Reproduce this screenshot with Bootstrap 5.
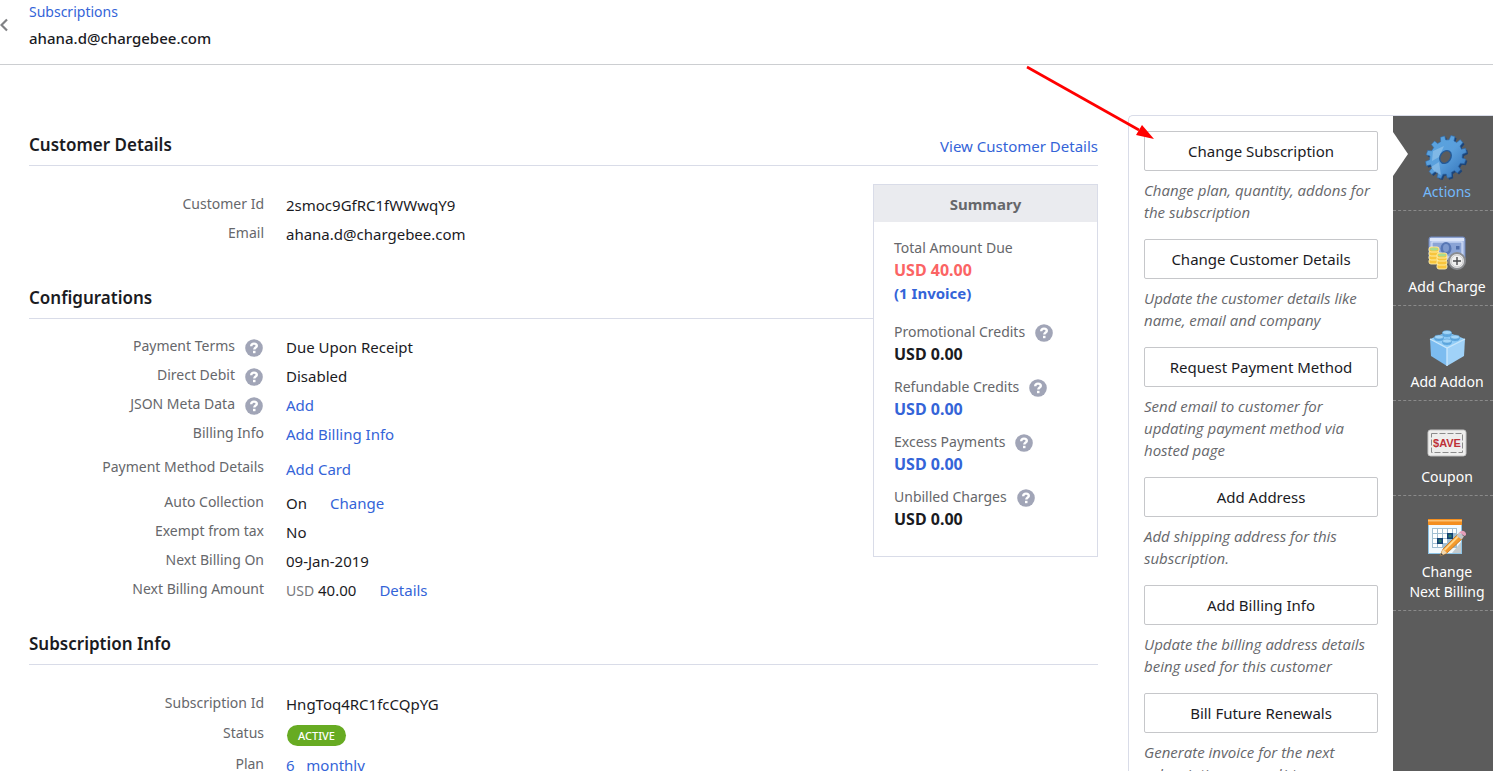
<!DOCTYPE html>
<html lang="en">
<head>
<meta charset="utf-8">
<meta name="viewport" content="width=device-width, initial-scale=1">
<title>Subscription details</title>
<link rel="stylesheet" href="https://cdn.jsdelivr.net/npm/bootstrap@5.3.0/dist/css/bootstrap.min.css">
<style>
  body { font-family: "Noto Sans", "Open Sans", sans-serif; font-size: 15px; line-height: 23px; color: #1b1b1f; }
  a { color: #3464d8; text-decoration: none; }
  a:hover { text-decoration: underline; }

  .page-head { border-bottom: 1px solid #ccced1; padding: 1px 0 11px 29px; }
  .crumb { font-size: 14px; line-height: 22px; }
  .page-title { font-size: 15px; line-height: 30px; font-weight: 500; }
  .back-link { left: 0; top: 18px; line-height: 0; }

  .page-body { padding-top: 50px; }
  .details { padding: 11px 30px 0 29px; min-width: 0; }
  .section-head { height: 40px; padding-bottom: 7px; border-bottom: 1px solid #d9dce8; }
  .section-head h2 { font-size: 17px; line-height: 26px; font-weight: 600; }
  .section-far { margin-top: 30px; }
  .section-near { margin-top: 20px; }

  .fields { margin: 0; padding-top: 25px; }
  .fields-tight { padding-top: 14px; }
  .field { display: flex; align-items: center; gap: 22px; min-height: 29px; }
  .field dt { width: 235px; flex: none; display: flex; justify-content: flex-end; gap: 10px; padding-bottom: 5px;
              font-size: 14px; font-weight: 400; color: #66676b; }
  .field dd { margin: 0; display: flex; gap: 23px; }
  .field-roomy { min-height: 40px; }
  .field-status { min-height: 32px; }
  .help { width: 18px; height: 18px; flex: none; margin-top: 4px; }
  .field .help { margin: 5px 1px 0 0; }
  .unit { font-size: 14px; color: #77787c; }
  .status-pill { background: #67ab22; color: #fff; font-size: 11px; line-height: 21px; font-weight: 500; padding: 0 11px; margin-left: 1px; }

  .summary { width: 225px; margin-top: 18px; border: 1px solid #d9dce8; background: #fff; }
  .summary h3 { margin: 0; height: 37px; padding-top: 1px; font-size: 15px; line-height: 37px; font-weight: 700; text-align: center; color: #66676b; background: #eaebef; }
  .summary-body { padding: 14px 20px 25px; }
  .sum-group { margin-bottom: 9px; }
  .sum-first { margin-bottom: 15px; }
  .sum-label { display: flex; gap: 10px; height: 23px; font-size: 14px; color: #66676b; }
  .sum-value { font-size: 16px; font-weight: 700; }
  .sum-link { font-size: 15px; font-weight: 700; }
  .due { color: #fb6464; }

  .side { width: 365px; border: 1px solid #d9dce8; border-width: 1px 0 0 1px; border-top-left-radius: 5px; }
  .action-list { padding: 15px; min-width: 0; }
  .btn-action { height: 40px; border: 1px solid #c6c7ca; border-radius: 2px; font-size: 15px; color: #1b1b1f; background: #fff; }
  .action-note { font-family: "Open Sans", "Noto Sans", sans-serif; font-size: 15px; line-height: 22px; font-style: italic; color: #66676b; margin: 8px 0 16px; }
  .pointer { left: -103px; top: -51px; pointer-events: none; }

  .rail { width: 100px; background: #5c5c5c; }
  .rail-item { display: block; width: 100%; border: 0; border-bottom: 1px dashed #8a8a8a; background: none; color: #fff;
               padding: 18px 0 8px 8px; font-size: 14px; line-height: 20px; text-align: center; }
  .rail-item svg { display: block; margin: 0 auto; }
  .rail-item.current { color: #73b9fb; }
  .rail-item.current::before { content: ""; position: absolute; left: 0; top: 16px; width: 15px; height: 44px; background: #fff; clip-path: polygon(0 0, 100% 50%, 0 100%); }
</style>
<script src="https://cdn.jsdelivr.net/npm/bootstrap@5.3.0/dist/js/bootstrap.bundle.min.js" defer></script>
</head>
<body class="vh-100 d-flex flex-column overflow-hidden bg-white">

<svg class="d-none" aria-hidden="true">
  <symbol id="help" viewBox="0 0 18 18">
    <circle cx="9" cy="9" r="8.8" fill="#a1a5b7"/>
    <path d="M6.200 7.200C6.300 5.400 7.400 4.600 9 4.600c1.600 0 2.800.9 2.800 2.300 0 1.700-2.500 1.700-2.500 3.700" fill="none" stroke="#fff" stroke-width="2.400"/>
    <rect x="8" y="11.800" width="2.500" height="2.400" fill="#fff"/>
  </symbol>
</svg>

<header class="page-head position-relative">
  <a href="#" class="back-link position-absolute" aria-label="Back">
    <svg width="9" height="14" viewBox="0 0 9 14"><path d="M7 1.500 1.500 7 7 12.500" fill="none" stroke="#808184" stroke-width="2.200"/></svg>
  </a>
  <div class="crumb"><a href="#">Subscriptions</a></div>
  <h1 class="page-title m-0">ahana.d@chargebee.com</h1>
</header>

<main class="page-body d-flex flex-fill align-items-stretch">
  <div class="details flex-fill">
    <div class="section-head d-flex justify-content-between align-items-end">
      <h2 class="m-0">Customer Details</h2>
      <a href="#">View Customer Details</a>
    </div>

    <aside class="summary float-end">
      <h3>Summary</h3>
      <div class="summary-body">
        <div class="sum-first">
          <div class="sum-label">Total Amount Due</div>
          <div class="sum-value due">USD 40.00</div>
          <a href="#" class="sum-link d-block">(1 Invoice)</a>
        </div>
        <div class="sum-group">
          <div class="sum-label">Promotional Credits <svg class="help"><use href="#help"/></svg></div>
          <div class="sum-value">USD 0.00</div>
        </div>
        <div class="sum-group">
          <div class="sum-label">Refundable Credits <svg class="help"><use href="#help"/></svg></div>
          <a href="#" class="sum-value d-block">USD 0.00</a>
        </div>
        <div class="sum-group">
          <div class="sum-label">Excess Payments <svg class="help"><use href="#help"/></svg></div>
          <a href="#" class="sum-value d-block">USD 0.00</a>
        </div>
        <div>
          <div class="sum-label">Unbilled Charges <svg class="help"><use href="#help"/></svg></div>
          <div class="sum-value">USD 0.00</div>
        </div>
      </div>
    </aside>

    <dl class="fields">
      <div class="field"><dt>Customer Id</dt><dd>2smoc9GfRC1fWWwqY9</dd></div>
      <div class="field"><dt>Email</dt><dd>ahana.d@chargebee.com</dd></div>
    </dl>

    <div class="section-head section-far d-flex align-items-end"><h2 class="m-0">Configurations</h2></div>
    <dl class="fields fields-tight">
      <div class="field"><dt>Payment Terms <svg class="help"><use href="#help"/></svg></dt><dd>Due Upon Receipt</dd></div>
      <div class="field"><dt>Direct Debit <svg class="help"><use href="#help"/></svg></dt><dd>Disabled</dd></div>
      <div class="field"><dt>JSON Meta Data <svg class="help"><use href="#help"/></svg></dt><dd><a href="#">Add</a></dd></div>
      <div class="field"><dt>Billing Info</dt><dd><a href="#">Add Billing Info</a></dd></div>
      <div class="field field-roomy"><dt>Payment Method Details</dt><dd><a href="#">Add Card</a></dd></div>
      <div class="field"><dt>Auto Collection</dt><dd>On <a href="#">Change</a></dd></div>
      <div class="field"><dt>Exempt from tax</dt><dd>No</dd></div>
      <div class="field"><dt>Next Billing On</dt><dd>09-Jan-2019</dd></div>
      <div class="field"><dt>Next Billing Amount</dt><dd><span><span class="unit">USD</span> 40.00</span> <a href="#">Details</a></dd></div>
    </dl>

    <div class="section-head section-near d-flex align-items-end"><h2 class="m-0">Subscription Info</h2></div>
    <dl class="fields">
      <div class="field"><dt>Subscription Id</dt><dd>HngToq4RC1fcCQpYG</dd></div>
      <div class="field field-status"><dt>Status</dt><dd><span class="status-pill rounded-pill">ACTIVE</span></dd></div>
      <div class="field"><dt>Plan</dt><dd><a href="#">6 &nbsp; monthly</a></dd></div>
    </dl>
  </div>

  <div class="side d-flex flex-shrink-0 position-relative">
    <div class="action-list flex-fill">
      <button type="button" class="btn btn-action w-100">Change Subscription</button>
      <p class="action-note">Change plan, quantity, addons for the subscription</p>
      <button type="button" class="btn btn-action w-100">Change Customer Details</button>
      <p class="action-note">Update the customer details like name, email and company</p>
      <button type="button" class="btn btn-action w-100">Request Payment Method</button>
      <p class="action-note">Send email to customer for updating payment method via hosted page</p>
      <button type="button" class="btn btn-action w-100">Add Address</button>
      <p class="action-note">Add shipping address for this subscription.</p>
      <button type="button" class="btn btn-action w-100">Add Billing Info</button>
      <p class="action-note">Update the billing address details being used for this customer</p>
      <button type="button" class="btn btn-action w-100">Bill Future Renewals</button>
      <p class="action-note">Generate invoice for the next subscription renewal(s)</p>
    </div>

    <nav class="rail flex-shrink-0">
      <button type="button" class="rail-item current position-relative">
        <svg width="48" height="48" viewBox="0 0 48 48">
          <defs><linearGradient id="gearFill" x1="0" y1="0" x2="1" y2="1"><stop offset="0" stop-color="#5aa5e0"/><stop offset=".5" stop-color="#5a9fdc"/><stop offset="1" stop-color="#2f6fb6"/></linearGradient></defs>
          <path id="gearSide" fill="#1c4478"/><path id="gearFace" fill="url(#gearFill)" stroke="#2f6cac" stroke-width=".6"/>
          <path d="M10 17 21 12 16 23 9 27Z M8 33l8-5 2 13-6-3Z" fill="#b9dcf6" opacity=".4"/>
          <ellipse cx="22.500" cy="23" rx="5.200" ry="6.800" transform="rotate(35 22.500 23)" fill="#5c5c5c" stroke="#245a98" stroke-width="1.400"/>
        </svg>
        Actions
      </button>
      <button type="button" class="rail-item">
        <svg width="48" height="48" viewBox="0 0 48 48">
          <rect x="6" y="8" width="36" height="23" rx="2" fill="#a9bde6" stroke="#6e86bb"/>
          <path d="M7 9h34v3H7z" fill="#dbe5fa"/><rect x="9" y="13" width="30" height="15" fill="#8ba4d6" stroke="#dce6fb"/>
          <ellipse cx="23" cy="19.500" rx="5.500" ry="6.500" fill="#5877b5"/><ellipse cx="23" cy="19" rx="3" ry="4" fill="#7f9ace"/>
          <rect x="33" y="17" width="3.500" height="3.500" fill="#4f6daa"/>
          <g fill="#f8c53c" stroke="#fff0ad" stroke-width=".9">
            <rect x="6" y="30" width="10" height="5" rx="2"/><rect x="6" y="26" width="10" height="5" rx="2"/><rect x="6" y="22" width="10" height="5" rx="2"/><rect x="6" y="18" width="10" height="5" rx="2"/>
            <rect x="14" y="35" width="10" height="5" rx="2"/><rect x="14" y="31" width="10" height="5" rx="2"/><rect x="14" y="27" width="10" height="5" rx="2"/><rect x="14" y="24" width="10" height="5" rx="2"/>
          </g>
          <ellipse cx="11" cy="20" rx="4" ry="1.500" fill="#a9dc91"/><ellipse cx="19" cy="26" rx="4" ry="1.500" fill="#a9dc91"/>
          <circle cx="34" cy="32" r="8" fill="#f0f0f0" stroke="#8a8c90" stroke-width="2"/><circle cx="34" cy="32" r="6" fill="none" stroke="#c8c9cb"/>
          <path d="M34 28v8M30 32h8" stroke="#4a4b4e" stroke-width="1.400"/>
        </svg>
        Add Charge
      </button>
      <button type="button" class="rail-item">
        <svg width="48" height="48" viewBox="0 0 48 48">
          <path d="M7 15 24 8 42 15 24 24Z" fill="#91cdf8"/><path d="M7 15 24 24V42L8 32Z" fill="#7cbcf0"/><path d="M42 15 24 24V42L41 32Z" fill="#a0d2f8"/>
          <path d="M7 15 24 24 42 15M24 24V42" fill="none" stroke="#cbe9fd" stroke-width="1.300"/>
          <g stroke="#4e96ce" stroke-width=".5">
            <path d="M19.500 8.500v2c0 3 9 3 9 0v-2M11.500 13v1.500c0 3 9 3 9 0V13M27.500 13v1.500c0 3 9 3 9 0V13M19.500 17v1.500c0 3 9 3 9 0V17" fill="#5da8e0"/>
            <g fill="#a2d5f8"><ellipse cx="24" cy="8.500" rx="4.500" ry="2"/><ellipse cx="16" cy="13" rx="4.500" ry="2"/><ellipse cx="32" cy="13" rx="4.500" ry="2"/><ellipse cx="24" cy="17" rx="4.500" ry="2"/></g>
          </g>
        </svg>
        Add Addon
      </button>
      <button type="button" class="rail-item">
        <svg width="48" height="48" viewBox="0 0 48 48">
          <rect x="5" y="12" width="38" height="26" rx="2.500" fill="#3f3f3f" opacity=".5"/>
          <rect x="5" y="11" width="38" height="26" rx="2.500" fill="#eeeeed" stroke="#c5c5c5"/>
          <rect x="8.500" y="14.500" width="31" height="19" fill="none" stroke="#8b8b8b" stroke-dasharray="6 2"/>
          <text x="24" y="28" text-anchor="middle" font-family="Liberation Sans, sans-serif" font-size="11" font-weight="700" fill="#bd3138">$AVE</text>
        </svg>
        Coupon
      </button>
      <button type="button" class="rail-item">
        <svg width="48" height="48" viewBox="0 0 48 48">
          <rect x="5.500" y="5.500" width="33" height="34" fill="#f2f9fd" stroke="#8dc4e6"/>
          <path d="M5 5h34v6H5z" fill="#f38e1f"/><path d="M5 6h34v1.500H5z" fill="#fbc070"/>
          <path d="M29 39h9V28Z" fill="#c5ccd0"/>
          <path d="M9 14h25v20H9z" fill="#a2bfd1"/>
          <g fill="#fff"><path d="M10 15h4v4h-4zM15 15h4v4h-4zM20 15h4v4h-4zM25 15h4v4h-4zM30 15h3v4h-3zM10 20h4v4h-4zM15 20h4v4h-4zM20 20h4v4h-4zM10 25h4v4h-4zM20 25h4v4h-4zM10 30h4v3h-4zM15 30h4v3h-4z"/></g>
          <path d="M14 24h6v6h-6zM24 19h6v6h-6z" fill="#123f74"/><path d="M15.500 25.500h3v3h-3zM25.500 20.500h3v3h-3z" fill="#2e7c68"/>
          <path d="M17 42 20 35 35 20 40 24 24 39Z" fill="#f49a2d" stroke="#c2721b" stroke-width=".8"/><path d="M21.500 36 36.500 21" stroke="#ffd78c" stroke-width="1.800"/>
          <path d="M17 42 20 35 24 39Z" fill="#f1d8b0"/><path d="M17 42l1.200-3 1.800 1.800Z" fill="#444"/>
          <path d="M33.500 21.500 36 18.500 41 22.500 38.500 25.500Z" fill="#c3c6ca"/><path d="M36 18.500 38 17q3-1 4.500 1.500t-1 3.500Z" fill="#e5a0bb"/>
        </svg>
        Change<br>Next Billing
      </button>
    </nav>

    <svg class="pointer position-absolute" width="130" height="76" viewBox="0 0 130 76" aria-hidden="true">
      <path d="M1 2 113 65" stroke="#f00" stroke-width="2.600" fill="none"/><path d="M128 74 110 70 116 60Z" fill="#f00"/>
    </svg>
  </div>
</main>

<script>
  // Twelve-toothed gear face with a darker copy offset behind it for depth.
  const teeth = 12, pts = [];
  for (let i = 0; i < teeth; i++) {
    for (const [step, r] of [[-.30, 18], [-.20, 22.5], [.20, 22.5], [.30, 18]]) {
      const a = (i + step) * 2 * Math.PI / teeth + .2, x = r * Math.cos(a) * .86, y = r * Math.sin(a), t = .6;
      pts.push([23 + x * Math.cos(t) - y * Math.sin(t), 23 + x * Math.sin(t) + y * Math.cos(t)]);
    }
  }
  const outline = d => 'M' + pts.map(p => (p[0] + d).toFixed(1) + ' ' + (p[1] + d).toFixed(1)).join('L') + 'Z';
  document.getElementById('gearFace').setAttribute('d', outline(0));
  document.getElementById('gearSide').setAttribute('d', outline(1.6));
</script>
</body>
</html>
